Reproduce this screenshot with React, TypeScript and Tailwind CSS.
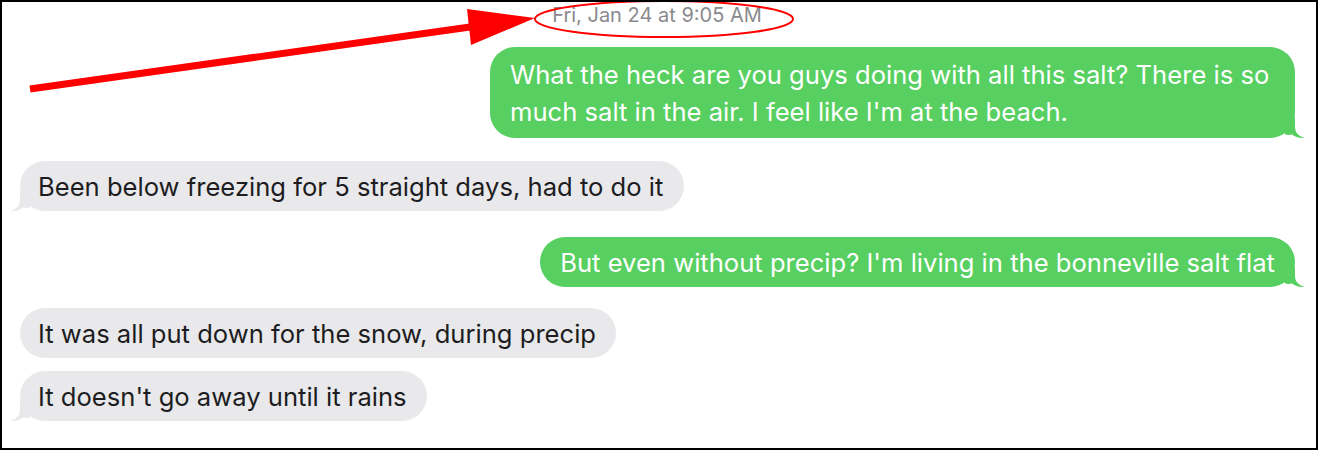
import React from 'react';

const messages = [
  { from: 'me', text: "What the heck are you guys doing with all this salt? There is so much salt in the air. I feel like I'm at the beach.", tail: true, cls: 'mt-5 max-w-[805px] py-[8.5px] pl-5 pr-5' },
  { from: 'them', text: 'Been below freezing for 5 straight days, had to do it', tail: true, cls: 'mt-[23px] py-[6.5px] pl-[18px] pr-[21px]' },
  { from: 'me', text: "But even without precip? I'm living in the bonneville salt flat", tail: true, cls: 'mt-[26px] py-[6.5px] px-[20px]' },
  { from: 'them', text: 'It was all put down for the snow, during precip', tail: false, cls: 'mt-[21px] py-[6.5px] pl-[18px] pr-[20px]' },
  { from: 'them', text: "It doesn't go away until it rains", tail: true, cls: 'mt-[13px] py-[6.5px] pl-[18px] pr-[20px]' },
];

function Tail({ side, color }: { side: 'left' | 'right'; color: string }) {
  const path = 'M0 0 L10 0 L10 9 C10 14 13 18 20 20 C15 20.5 10 19 7 16.5 C5 17 2 17 0 16.5 Z';
  if (side === 'right') {
    return (
      <svg className="absolute -right-[10px] bottom-0" width="20" height="20" viewBox="0 0 20 20">
        <path d={path} fill={color} />
      </svg>
    );
  }
  return (
    <svg className="absolute -left-[10px] bottom-0" width="20" height="20" viewBox="0 0 20 20">
      <path d={path} fill={color} transform="translate(20 0) scale(-1 1)" />
    </svg>
  );
}

function Bubble({ from, text, tail, cls }: { from: string; text: string; tail: boolean; cls: string }) {
  const mine = from === 'me';
  return (
    <div
      className={
        'relative rounded-[25px] text-[25.6px] leading-[37px] ' +
        (mine ? 'self-end mr-[21px] bg-[#57cf61] text-white ' : 'self-start ml-[18px] bg-[#e9e9eb] text-[#1d1d1f] ') +
        cls
      }
    >
      {text}
      {tail && <Tail side={mine ? 'right' : 'left'} color={mine ? '#57cf61' : '#e9e9eb'} />}
    </div>
  );
}

export default function App() {
  return (
    <div
      className="relative w-[1318px] h-[450px] overflow-hidden border-2 border-black bg-white flex flex-col"
      style={{ fontFamily: 'Inter, "Noto Sans", sans-serif' }}
    >
      <div className="text-center text-[20px] leading-[24px] text-[#8a8a8e] mr-[4px] pt-px">Fri, Jan 24 at 9:05 AM</div>

      {messages.map((m, i) => (
        <Bubble key={i} {...m} />
      ))}

      {/* annotation: red arrow pointing at the circled timestamp */}
      <svg className="absolute -left-[2px] -top-[2px] pointer-events-none" width="1318" height="450">
        <ellipse cx="664" cy="19" rx="129" ry="18" fill="none" stroke="#ff0000" strokeWidth="2" />
        <line x1="30" y1="89" x2="470" y2="27" stroke="#ff0000" strokeWidth="7" />
        <polygon points="467,9 535,18 471,45" fill="#ff0000" />
      </svg>
    </div>
  );
}
